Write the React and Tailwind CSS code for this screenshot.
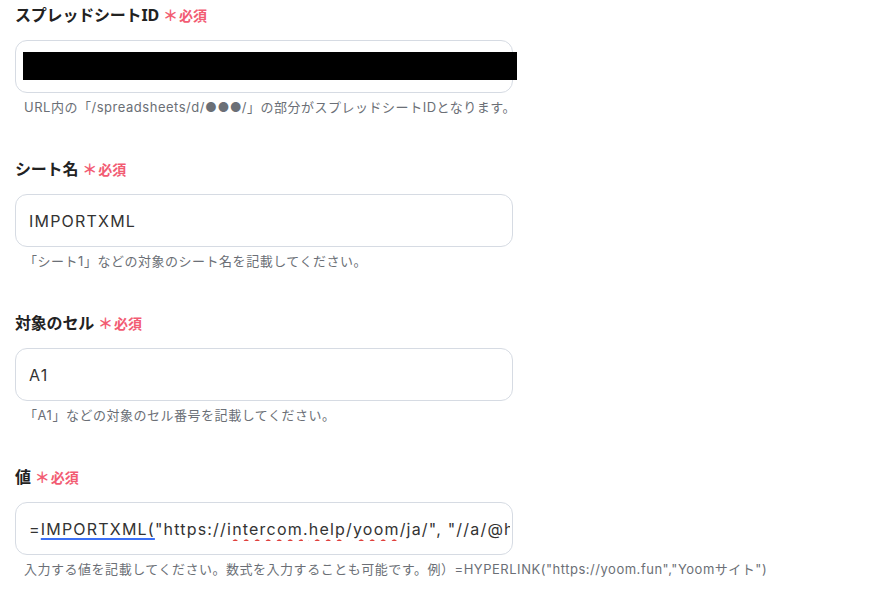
import React from "react";

const font = { fontFamily: 'Inter, "Noto Sans CJK JP", sans-serif' };

function Label({ children }) {
  return (
    <div className="flex items-center h-[24px]">
      <span className="text-[16px] font-bold text-[#222] tracking-[-0.2px]" style={{ fontFamily: '"Noto Sans", "Noto Sans CJK JP", sans-serif' }}>{children}</span>
      <span className="text-[#f25c73] text-[15px] font-bold leading-none ml-[4px]">＊</span>
      <span className="text-[#f25c73] text-[14px] font-bold ml-[1px]">必須</span>
    </div>
  );
}

const wavy = "underline decoration-wavy decoration-[#e0403c] decoration-[1.5px] underline-offset-[4px]";

function Field({ label, children, help }) {
  return (
    <div className="flex flex-col">
      <Label>{label}</Label>
      <div className="mt-[13px] w-[498px] h-[53px] border border-[#d6dbe3] rounded-[12px] bg-white flex items-center pl-[13px] pr-[2px] relative">
        {children}
      </div>
      <div className="mt-[5px] h-[18px] pl-[9px] text-[13px] tracking-[0.52px] text-[#6b6f76] leading-[18px] whitespace-nowrap">{help}</div>
    </div>
  );
}

export default function App() {
  return (
    <div className="w-[886px] h-[596px] bg-white pl-[15px] pt-[3px] flex flex-col gap-[41px] overflow-hidden" style={font}>
      <Field label="スプレッドシートID" help="URL内の「/spreadsheets/d/●●●/」の部分がスプレッドシートIDとなります。">
        <div className="absolute left-[7px] top-[11px] w-[494px] h-[28px] bg-black" />
      </Field>
      <Field label="シート名" help="「シート1」などの対象のシート名を記載してください。">
        <span className="text-[16px] tracking-[1.2px] text-[#333]">IMPORTXML</span>
      </Field>
      <Field label="対象のセル" help="「A1」などの対象のセル番号を記載してください。">
        <span className="text-[16px] tracking-[1.2px] text-[#333]">A1</span>
      </Field>
      <Field label="値" help={'入力する値を記載してください。数式を入力することも可能です。例）=HYPERLINK("https://yoom.fun","Yoomサイト")'}>
        <div className="text-[16px] tracking-[1.2px] text-[#333] whitespace-nowrap overflow-hidden w-full">
          =<span className="underline decoration-[#3b6ff5] decoration-[1.5px] underline-offset-[3px]">IMPORTXML(</span>"https://<span className={wavy}>intercom</span>.<span className={wavy}>help</span>/<span className={wavy}>yoom</span>/ja/", "//a/@href")
        </div>
      </Field>
    </div>
  );
}
